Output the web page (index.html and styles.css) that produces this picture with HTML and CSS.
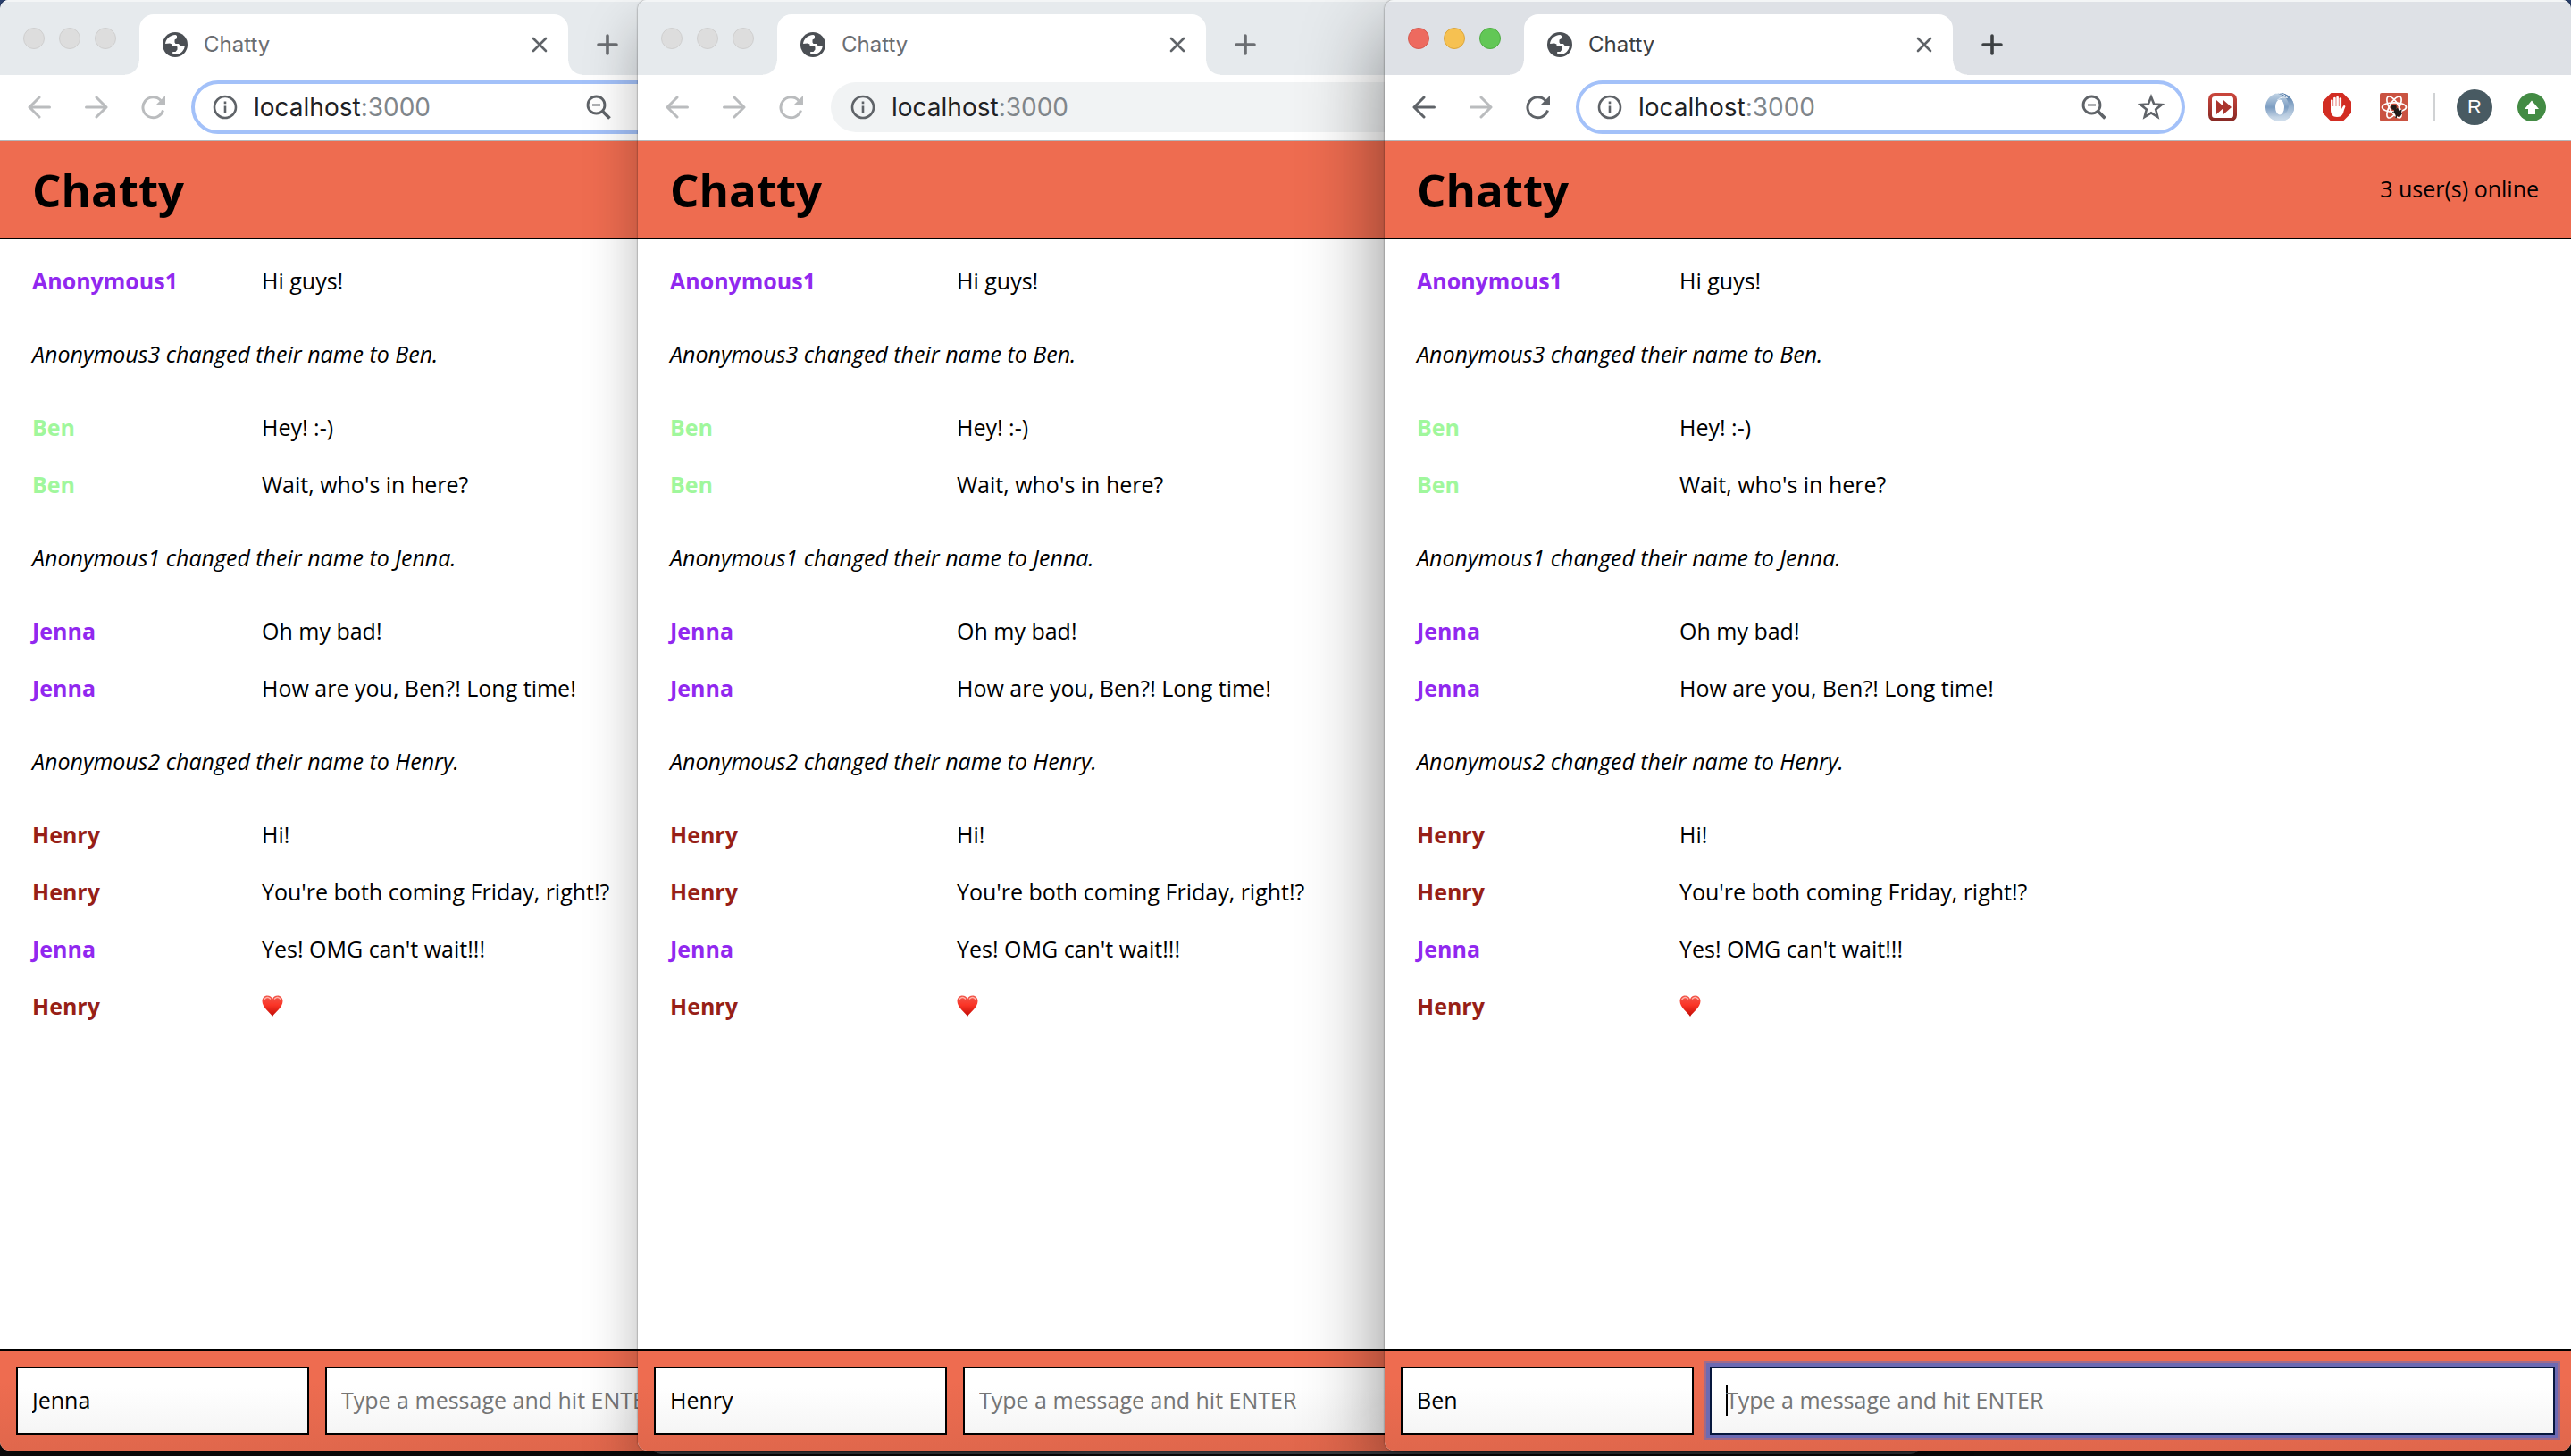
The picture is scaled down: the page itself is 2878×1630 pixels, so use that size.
FILE: index.html
```html
<!DOCTYPE html>
<html lang="en">
<head>
<meta charset="utf-8">
<meta name="viewport" content="width=device-width, initial-scale=1">
<title>Chatty</title>
<link rel="stylesheet" href="styles.css">
</head>
<body>
<svg class="sprite" aria-hidden="true">
  <defs>
    <linearGradient id="heart-fill" x1="0" y1="0" x2="0" y2="1"><stop offset="0" stop-color="#f0574c"/><stop offset=".45" stop-color="#fb3527"/><stop offset="1" stop-color="#c00a04"/></linearGradient>
    <linearGradient id="red-frame" x1="0" y1="0" x2="0" y2="1"><stop offset="0" stop-color="#c8453b"/><stop offset="1" stop-color="#8a2a25"/></linearGradient>
    <linearGradient id="ring-a" x1="0" y1="0" x2="0" y2="1"><stop offset="0" stop-color="#c4d5e6"/><stop offset=".5" stop-color="#7c9dc2"/><stop offset="1" stop-color="#dde7f1"/></linearGradient>
    <linearGradient id="ring-b" x1="0" y1="0" x2="0" y2="1"><stop offset="0" stop-color="#4d76a5"/><stop offset=".5" stop-color="#9ab4d0"/><stop offset="1" stop-color="#d3e0ed"/></linearGradient>
  </defs>
  <symbol id="globe" viewBox="0 0 28 28"><circle cx="14" cy="14" r="14" fill="#4b4f54"/><path fill="#fff" d="M3 14C3 8 8 3 14.500 3l1.500 1v3l-2.500 1.500v3l1 1.500h3.500l1.500 2H24.800c0 5-4.500 10-10.800 10h-2.800v-3h3.300l2-2.500v-3l-2-1.500H10.500V13.500L8 12.500 3 13z"/></symbol>
  <symbol id="close" viewBox="0 0 18 18"><path d="M2 2l14 14M16 2L2 16" fill="none" stroke="currentColor" stroke-width="2.600" stroke-linecap="round"/></symbol>
  <symbol id="plus" viewBox="0 0 24 24"><path d="M12 2v20M2 12h20" fill="none" stroke="currentColor" stroke-width="3.600" stroke-linecap="round"/></symbol>
  <symbol id="arrow" viewBox="0 0 26 26"><path d="M24.500 13H2.500M13 2L2 13l11 11" fill="none" stroke="currentColor" stroke-width="3" stroke-linecap="round" stroke-linejoin="round"/></symbol>
  <symbol id="reload" viewBox="0 0 28 28"><path d="M24.500 17.500A11.500 11.500 0 1 1 22 6.500" fill="none" stroke="currentColor" stroke-width="3"/><path d="M27 1v11H16z" fill="currentColor"/></symbol>
  <symbol id="info" viewBox="0 0 28 28"><circle cx="14" cy="14" r="12" fill="none" stroke="currentColor" stroke-width="2.600"/><path d="M12.700 12.500h2.600V21h-2.600zM12.700 7.500h2.600v2.800h-2.600z" fill="currentColor"/></symbol>
  <symbol id="zoom-out" viewBox="0 0 28 28"><circle cx="11.500" cy="11.500" r="9.500" fill="none" stroke="currentColor" stroke-width="2.800"/><path d="M7 11.500h9" stroke="currentColor" stroke-width="2"/><path d="M18 18l8.500 8.500" stroke="currentColor" stroke-width="3.800"/></symbol>
  <symbol id="star" viewBox="0 0 30 30"><path d="M15 3.500l3.200 8 8.600.6-6.600 5.500 2.100 8.400-7.300-4.600L7.700 26l2.100-8.400-6.600-5.500 8.600-.6z" fill="none" stroke="currentColor" stroke-width="2.600"/></symbol>
  <symbol id="forward-ext" viewBox="0 0 32 32"><rect x="2" y="2" width="28" height="28" rx="5" fill="#fff" stroke="url(#red-frame)" stroke-width="4"/><path d="M9 8l8 7V8l9 8-9 8v-7l-8 7z" fill="#aa342c"/></symbol>
  <symbol id="ring-ext" viewBox="0 0 32 32"><circle cx="16" cy="16" r="16" fill="url(#ring-a)"/><path d="M12 0.500C24 2 29 12 24 21 19 28 8 27 3 25.500 7 30.500 12 32 16 32 25 32 32 25 32 16 32 7 25 0 16 0q-2 0-4 .5z" fill="url(#ring-b)"/><path d="M12 .5C18 0 22 2 24.500 5.500 20 4.500 16 5 13.500 8" fill="none" stroke="#eef3f8" stroke-width="1"/><ellipse cx="16" cy="16" rx="5" ry="8.500" fill="#fff"/></symbol>
  <symbol id="hand-ext" viewBox="0 0 32 32"><path d="M9.500 0h13L32 9.500v13L22.500 32h-13L0 22.500v-13z" fill="#d22c22"/><path d="M9 15V8q1.300-1.600 2.500 0v7h.6V5.500q1.300-1.700 2.600 0V15h.6V4.500q1.300-1.700 2.600 0V15h.6V6q1.300-1.700 2.600 0v12l1.800-3.200q1.300-1.600 2.600.2-1.500 3.500-2.500 7.500C22 25.800 19.500 27 16 27c-5 0-7-3.500-7-8z" fill="#fff"/></symbol>
  <symbol id="react-ext" viewBox="0 0 32 32"><rect width="32" height="32" rx="2" fill="#ca5341"/><g fill="none" stroke="#fff" stroke-width="1.700"><ellipse cx="16" cy="16" rx="13.500" ry="5.200"/><ellipse cx="16" cy="16" rx="13.500" ry="5.200" transform="rotate(60 16 16)"/><ellipse cx="16" cy="16" rx="13.500" ry="5.200" transform="rotate(120 16 16)"/></g><ellipse cx="20" cy="22" rx="3.400" ry="5" transform="rotate(-45 20 22)" fill="#211c1a"/><circle cx="15.800" cy="16" r="3" fill="#211c1a"/><path d="M14 22l11 1M18 28l2-11M22 27l-5-6M24 19l-2 6" stroke="#211c1a" stroke-width="1.500"/></symbol>
  <symbol id="update" viewBox="0 0 32 32"><circle cx="16" cy="16" r="16" fill="#438b44"/><path d="M16 8.500l8 9.500h-4v6h-8v-6H8z" fill="#fff"/></symbol>
  <symbol id="heart" viewBox="0 0 24 24"><path d="M12 24C9 19 .5 14 .5 6.800.5 3 3 .500 6.300.500 9 .500 11.200 2 12 4.500 12.800 2 15 .500 17.700.500 21 .500 23.500 3 23.500 6.800 23.500 14 15 19 12 24z" fill="url(#heart-fill)"/><path d="M3 4.500Q6 .8 9.500 4M14.500 4Q18 .8 21 4.500" fill="none" stroke="#ffb3a8" stroke-width="1.500" stroke-linecap="round"/></symbol>
</svg>

<main class="desktop">
  <div class="hidden-window"></div>

  <section class="window window-jenna" aria-label="Jenna's window">
    <div class="tab-strip">
      <div class="lights"><span class="light"></span><span class="light"></span><span class="light"></span></div>
      <div class="tab"><svg class="i28"><use href="#globe"/></svg><span class="tab-title">Chatty</span><button class="icon-button" aria-label="Close tab"><svg class="i18"><use href="#close"/></svg></button></div>
      <button class="icon-button new-tab" aria-label="New tab"><svg class="i24"><use href="#plus"/></svg></button>
    </div>
    <div class="toolbar">
      <button class="icon-button tool off" aria-label="Back"><svg class="i26"><use href="#arrow"/></svg></button>
      <button class="icon-button tool off" aria-label="Forward"><svg class="i26 flip"><use href="#arrow"/></svg></button>
      <button class="icon-button tool off" aria-label="Reload"><svg class="i28"><use href="#reload"/></svg></button>
      <div class="address active"><svg class="i28"><use href="#info"/></svg><span class="url">localhost<span class="port">:3000</span></span>
        <button class="icon-button tool" aria-label="Zoom"><svg class="i28"><use href="#zoom-out"/></svg></button>
        <button class="icon-button tool" aria-label="Bookmark"><svg class="i30"><use href="#star"/></svg></button>
      </div>
      <div class="extensions"></div>
    </div>
    <header class="app-header"><h1>Chatty</h1></header>
    <ul class="messages">
      <li class="message"><b class="purple">Anonymous1</b><span>Hi guys!</span></li>
      <li class="notice">Anonymous3 changed their name to Ben.</li>
      <li class="message"><b class="green">Ben</b><span>Hey! :-)</span></li>
      <li class="message"><b class="green">Ben</b><span>Wait, who's in here?</span></li>
      <li class="notice">Anonymous1 changed their name to Jenna.</li>
      <li class="message"><b class="purple">Jenna</b><span>Oh my bad!</span></li>
      <li class="message"><b class="purple">Jenna</b><span>How are you, Ben?! Long time!</span></li>
      <li class="notice">Anonymous2 changed their name to Henry.</li>
      <li class="message"><b class="red">Henry</b><span>Hi!</span></li>
      <li class="message"><b class="red">Henry</b><span>You're both coming Friday, right!?</span></li>
      <li class="message"><b class="purple">Jenna</b><span>Yes! OMG can't wait!!!</span></li>
      <li class="message"><b class="red">Henry</b><svg class="i24" role="img" aria-label="Red heart"><use href="#heart"/></svg></li>
    </ul>
    <form class="composer">
      <input class="name" type="text" value="Jenna" aria-label="Name">
      <input class="text" type="text" placeholder="Type a message and hit ENTER" aria-label="Message">
    </form>
  </section>

  <section class="window window-henry" aria-label="Henry's window">
    <div class="tab-strip">
      <div class="lights"><span class="light"></span><span class="light"></span><span class="light"></span></div>
      <div class="tab"><svg class="i28"><use href="#globe"/></svg><span class="tab-title">Chatty</span><button class="icon-button" aria-label="Close tab"><svg class="i18"><use href="#close"/></svg></button></div>
      <button class="icon-button new-tab" aria-label="New tab"><svg class="i24"><use href="#plus"/></svg></button>
    </div>
    <div class="toolbar">
      <button class="icon-button tool off" aria-label="Back"><svg class="i26"><use href="#arrow"/></svg></button>
      <button class="icon-button tool off" aria-label="Forward"><svg class="i26 flip"><use href="#arrow"/></svg></button>
      <button class="icon-button tool off" aria-label="Reload"><svg class="i28"><use href="#reload"/></svg></button>
      <div class="address"><svg class="i28"><use href="#info"/></svg><span class="url">localhost<span class="port">:3000</span></span></div>
      <div class="extensions"></div>
    </div>
    <header class="app-header"><h1>Chatty</h1></header>
    <ul class="messages">
      <li class="message"><b class="purple">Anonymous1</b><span>Hi guys!</span></li>
      <li class="notice">Anonymous3 changed their name to Ben.</li>
      <li class="message"><b class="green">Ben</b><span>Hey! :-)</span></li>
      <li class="message"><b class="green">Ben</b><span>Wait, who's in here?</span></li>
      <li class="notice">Anonymous1 changed their name to Jenna.</li>
      <li class="message"><b class="purple">Jenna</b><span>Oh my bad!</span></li>
      <li class="message"><b class="purple">Jenna</b><span>How are you, Ben?! Long time!</span></li>
      <li class="notice">Anonymous2 changed their name to Henry.</li>
      <li class="message"><b class="red">Henry</b><span>Hi!</span></li>
      <li class="message"><b class="red">Henry</b><span>You're both coming Friday, right!?</span></li>
      <li class="message"><b class="purple">Jenna</b><span>Yes! OMG can't wait!!!</span></li>
      <li class="message"><b class="red">Henry</b><svg class="i24" role="img" aria-label="Red heart"><use href="#heart"/></svg></li>
    </ul>
    <form class="composer">
      <input class="name" type="text" value="Henry" aria-label="Name">
      <input class="text" type="text" placeholder="Type a message and hit ENTER" aria-label="Message">
    </form>
  </section>

  <section class="window window-ben front" aria-label="Ben's window">
    <div class="tab-strip">
      <div class="lights"><span class="light stop"></span><span class="light shrink"></span><span class="light grow"></span></div>
      <div class="tab"><svg class="i28"><use href="#globe"/></svg><span class="tab-title">Chatty</span><button class="icon-button" aria-label="Close tab"><svg class="i18"><use href="#close"/></svg></button></div>
      <button class="icon-button new-tab" aria-label="New tab"><svg class="i24"><use href="#plus"/></svg></button>
    </div>
    <div class="toolbar">
      <button class="icon-button tool" aria-label="Back"><svg class="i26"><use href="#arrow"/></svg></button>
      <button class="icon-button tool off" aria-label="Forward"><svg class="i26 flip"><use href="#arrow"/></svg></button>
      <button class="icon-button tool" aria-label="Reload"><svg class="i28"><use href="#reload"/></svg></button>
      <div class="address active"><svg class="i28"><use href="#info"/></svg><span class="url">localhost<span class="port">:3000</span></span>
        <button class="icon-button tool" aria-label="Zoom"><svg class="i28"><use href="#zoom-out"/></svg></button>
        <button class="icon-button tool" aria-label="Bookmark"><svg class="i30"><use href="#star"/></svg></button>
      </div>
      <div class="extensions">
        <button class="icon-button tool" aria-label="Fast forward"><svg class="i32"><use href="#forward-ext"/></svg></button>
        <button class="icon-button tool" aria-label="Ring"><svg class="i32"><use href="#ring-ext"/></svg></button>
        <button class="icon-button tool" aria-label="Ad blocker"><svg class="i32"><use href="#hand-ext"/></svg></button>
        <button class="icon-button tool" aria-label="React tools"><svg class="i32"><use href="#react-ext"/></svg></button>
        <span class="divider"></span>
        <button class="icon-button tool" aria-label="Profile"><span class="avatar">R</span></button>
        <button class="icon-button tool" aria-label="Update"><svg class="i32"><use href="#update"/></svg></button>
      </div>
    </div>
    <header class="app-header"><h1>Chatty</h1><span class="online">3 user(s) online</span></header>
    <ul class="messages">
      <li class="message"><b class="purple">Anonymous1</b><span>Hi guys!</span></li>
      <li class="notice">Anonymous3 changed their name to Ben.</li>
      <li class="message"><b class="green">Ben</b><span>Hey! :-)</span></li>
      <li class="message"><b class="green">Ben</b><span>Wait, who's in here?</span></li>
      <li class="notice">Anonymous1 changed their name to Jenna.</li>
      <li class="message"><b class="purple">Jenna</b><span>Oh my bad!</span></li>
      <li class="message"><b class="purple">Jenna</b><span>How are you, Ben?! Long time!</span></li>
      <li class="notice">Anonymous2 changed their name to Henry.</li>
      <li class="message"><b class="red">Henry</b><span>Hi!</span></li>
      <li class="message"><b class="red">Henry</b><span>You're both coming Friday, right!?</span></li>
      <li class="message"><b class="purple">Jenna</b><span>Yes! OMG can't wait!!!</span></li>
      <li class="message"><b class="red">Henry</b><svg class="i24" role="img" aria-label="Red heart"><use href="#heart"/></svg></li>
    </ul>
    <form class="composer">
      <input class="name" type="text" value="Ben" aria-label="Name">
      <input class="text typing" type="text" placeholder="Type a message and hit ENTER" aria-label="Message">
    </form>
  </section>
</main>
</body>
</html>
```
FILE: styles.css
```css
* { box-sizing: border-box; }

body {
  margin: 0;
  font-family: "Open Sans", "Noto Sans", sans-serif;
  font-size: 25px;
  line-height: 36px;
  color: #000;
}

.sprite { position: absolute; width: 0; height: 0; }

.desktop {
  position: relative;
  height: 100vh;
  overflow: hidden;
  background: linear-gradient(#2b4270, #0d0b0b);
}

/* Windows on the desktop */
.window {
  position: absolute;
  top: 0;
  bottom: 6px;
  display: flex;
  flex-direction: column;
  overflow: hidden;
  border-radius: 10px;
  background: #fff;
  box-shadow: 0 0 2px rgba(0, 0, 0, .6), 0 32px 60px rgba(0, 0, 0, .28);
}
.window-jenna { left: 0; width: 1204px; --name-column: 257px; }
.window-henry { left: 714px; width: 1436px; --name-column: 321px; }
.window-ben { left: 1550px; right: 0; --name-column: 294px; }
.window.front { box-shadow: 0 0 2px rgba(0, 0, 0, .6), 0 36px 92px rgba(0, 0, 0, .46); }

.hidden-window {
  position: absolute;
  left: 730px;
  width: 1419px;
  bottom: 2px;
  height: 40px;
  border-radius: 10px;
  background: #4a494f;
}

svg { display: block; flex: none; }
.i18 { width: 18px; height: 18px; }
.i24 { width: 24px; height: 24px; }
.i26 { width: 26px; height: 26px; }
.i28 { width: 28px; height: 28px; }
.i30 { width: 30px; height: 30px; }
.i32 { width: 32px; height: 32px; }
.flip { transform: scaleX(-1); }

.icon-button {
  display: flex;
  align-items: center;
  justify-content: center;
  padding: 0;
  border: 0;
  background: none;
  color: #5f6368;
}
.tool { width: 64px; height: 60px; }
.off { color: #babcbe; }

/* Browser tabs */
.tab-strip {
  display: flex;
  align-items: flex-end;
  height: 84px;
  flex: none;
  background: #e6eaed;
  box-shadow: inset 0 2px #f3f5f6;
}
.front .tab-strip { background: #dee1e6; }
.lights {
  display: flex;
  gap: 16px;
  width: 156px;
  padding: 0 0 29px 26px;
}
.light {
  width: 24px;
  height: 24px;
  border: 1px solid #cfcfcf;
  border-radius: 50%;
  background: #dddddd;
}
.stop { background: #ed6a5f; border-color: #d55a50; }
.shrink { background: #f6c151; border-color: #dba53c; }
.grow { background: #62c756; border-color: #4fac43; }
.tab {
  position: relative;
  display: flex;
  align-items: center;
  width: 480px;
  height: 68px;
  padding: 0 23px 0 26px;
  border-radius: 16px 16px 0 0;
  background: #fff;
}
.tab::before,
.tab::after {
  content: "";
  position: absolute;
  bottom: 0;
  width: 16px;
  height: 16px;
}
.tab::before { left: -16px; background: radial-gradient(circle at 0 0, transparent 15px, #fff 16px); }
.tab::after { right: -16px; background: radial-gradient(circle at 100% 0, transparent 15px, #fff 16px); }
.tab-title {
  flex: 1;
  margin-left: 18px;
  font-family: Inter, Roboto, sans-serif;
  font-size: 24px;
  color: #6b6e72;
}
.front .tab-title { color: #3c4043; }
.new-tab { width: 88px; height: 68px; color: #6b6e72; }
.front .new-tab { color: #3c4043; }

/* Navigation and address */
.toolbar {
  display: flex;
  align-items: center;
  flex: none;
  height: 74px;
  padding: 0 12px 2px;
  border-bottom: 1px solid #b4b6ba;
}
.address {
  display: flex;
  align-items: center;
  flex: 1;
  height: 56px;
  margin: 0 10px 0 12px;
  padding-left: 22px;
  border-radius: 30px;
  background: #f1f3f4;
  color: #5f6368;
}
.address.active {
  height: 60px;
  margin-left: 10px;
  padding: 0 2px 0 20px;
  border: 4px solid #a3c1f9;
  background: #fff;
}
.url {
  flex: 1;
  margin-left: 18px;
  font-family: Inter, Roboto, sans-serif;
  font-size: 28px;
  color: #202124;
}
.port { color: #80868b; }
.extensions { display: flex; align-items: center; }
.extensions:empty { width: 410px; }
.divider { width: 2px; height: 32px; margin: 0 12px; background: #d0d2d4; }
.avatar {
  width: 40px;
  height: 40px;
  border-radius: 50%;
  background: #485a62;
  color: #fff;
  font-family: "Liberation Sans", Arial, sans-serif;
  font-size: 22px;
  line-height: 40px;
}

/* Chat page */
.app-header {
  display: flex;
  align-items: center;
  justify-content: space-between;
  flex: none;
  height: 110px;
  padding: 0 36px;
  border-bottom: 2px solid #000;
  background: #ee6c50;
}
h1 { margin: 0; font-size: 51px; line-height: 72px; }
.online { padding-bottom: 2px; }
.messages {
  flex: 1;
  margin: 0;
  padding: 14px 36px;
  list-style: none;
}
.message {
  display: grid;
  grid-template-columns: var(--name-column) 1fr;
  align-items: center;
  height: 64px;
}
.notice { padding: 32px 0; font-style: italic; }
.purple { color: #9128ef; }
.green { color: #a0f79c; }
.red { color: #971f17; }

.composer {
  display: flex;
  gap: 18px;
  flex: none;
  padding: 18px;
  border-top: 2px solid #000;
  background: linear-gradient(#ee6c50 30%, #e0674c);
}
.composer input {
  min-width: 0;
  height: 76px;
  padding: 0 16px 2px;
  border: 2px solid #000;
  border-radius: 0;
  outline: 0;
  background: linear-gradient(#fff 30%, #f5f5f5);
  font: inherit;
  color: #000;
}
.composer .name { width: 328px; }
.composer .text { flex: 1; }
.composer input::placeholder { color: #757575; opacity: 1; }
.composer .typing {
  border-color: #06173d;
  background:
    linear-gradient(#000, #000) 16px 19px / 2px 34px no-repeat,
    linear-gradient(#fff 30%, #f5f5f5);
  box-shadow: 0 0 0 4px #6c6ab3, 0 0 0 6px rgba(108, 106, 179, .6);
}
```
